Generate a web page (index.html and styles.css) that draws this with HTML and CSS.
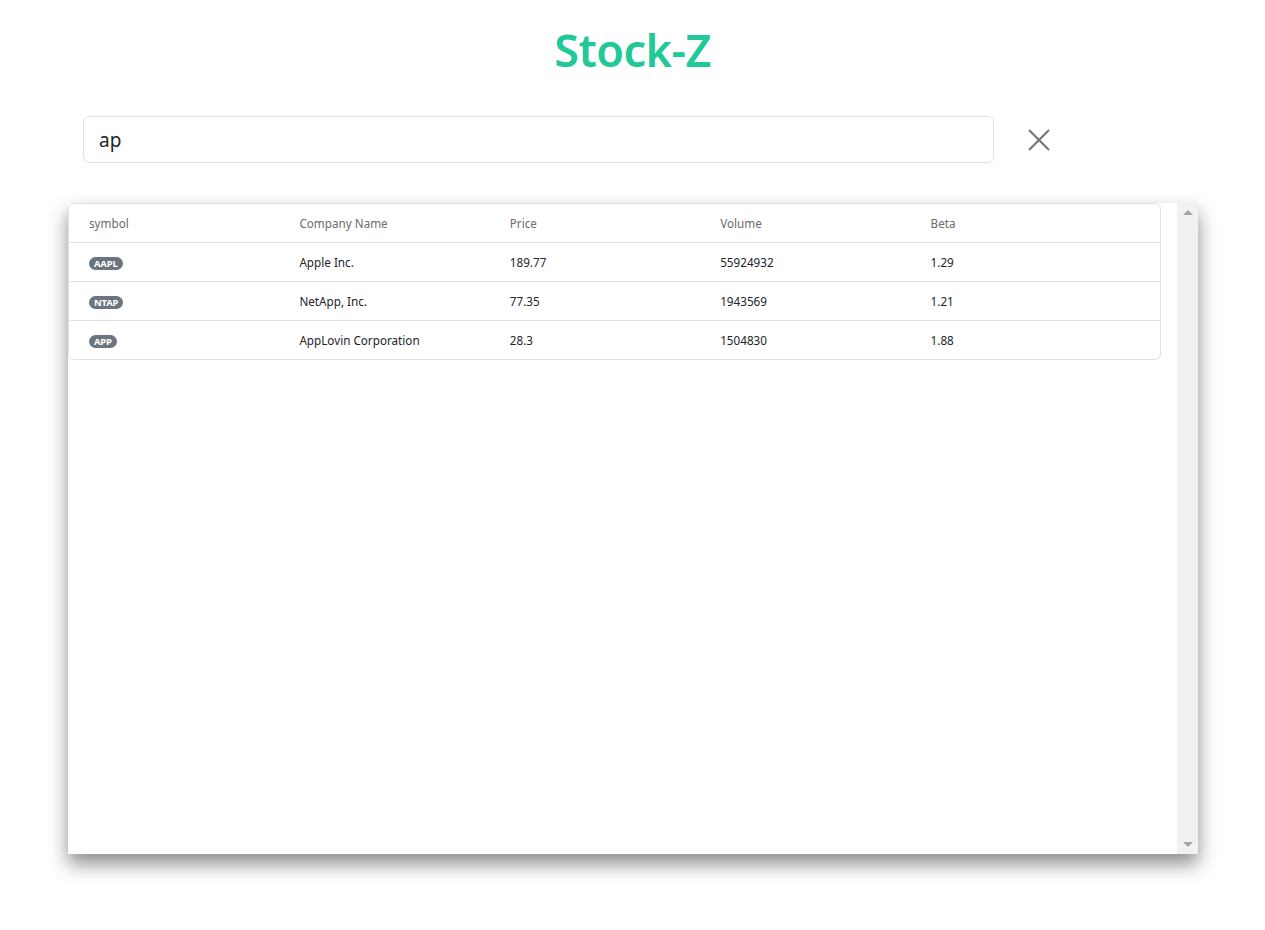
FILE: index.html
```html
<!DOCTYPE html>
<html>
<head>
<meta charset="utf-8">
<link rel="stylesheet" href="styles.css">
</head>
<body>
<div class="app">
  <h1 class="title">Stock-Z</h1>
  <div class="search-row">
    <div class="search-box">ap</div>
    <button class="clear-btn" aria-label="clear">
      <svg width="24" height="24" viewBox="0 0 24 24"><path d="M2 2 L22 22 M22 2 L2 22" stroke="#777" stroke-width="2.2" fill="none"/></svg>
    </button>
  </div>
  <div class="panel">
    <div class="panel-content">
      <div class="table">
        <div class="row head">
          <div>symbol</div><div>Company Name</div><div>Price</div><div>Volume</div><div>Beta</div>
        </div>
        <div class="row">
          <div><span class="badge">AAPL</span></div><div>Apple Inc.</div><div>189.77</div><div>55924932</div><div>1.29</div>
        </div>
        <div class="row">
          <div><span class="badge">NTAP</span></div><div>NetApp, Inc.</div><div>77.35</div><div>1943569</div><div>1.21</div>
        </div>
        <div class="row">
          <div><span class="badge">APP</span></div><div>AppLovin Corporation</div><div>28.3</div><div>1504830</div><div>1.88</div>
        </div>
      </div>
    </div>
    <div class="scrollbar">
      <span class="arrow up"></span>
      <span class="arrow down"></span>
    </div>
  </div>
</div>
</body>
</html>
```
FILE: styles.css
```css
* { box-sizing: border-box; }
html, body { margin: 0; padding: 0; background: #fff; }
body { font-family: "Noto Sans", "Open Sans", "Liberation Sans", sans-serif; color: #212529; }
.app { width: 1265px; height: 930px; padding-top: 20px; }
.title {
  margin: 0;
  text-align: center;
  font-size: 45px;
  font-weight: 600;
  line-height: 60px;
  color: #20c997;
  letter-spacing: -0.5px;
}
.search-row {
  display: flex;
  align-items: center;
  margin: 36px 0 0 83px;
  gap: 33px;
}
.search-box {
  width: 911px;
  height: 47px;
  border: 1px solid #dee2e6;
  border-radius: 6px;
  padding: 0 15px;
  font-size: 19px;
  line-height: 47px;
  color: #212529;
}
.clear-btn {
  border: 0; background: none; padding: 0; width: 24px; height: 24px; display: flex;
}
.panel {
  display: flex;
  margin: 40px 0 0 68px;
  width: 1130px;
  height: 651px;
  background: #fff;
  box-shadow: 0 10px 18px rgba(0,0,0,0.45);
}
.panel-content { flex: 1; padding-right: 16px; }
.table {
  border: 1px solid #dee2e6;
  border-radius: 6px;
  font-size: 11.7px;
}
.row {
  display: grid;
  grid-template-columns: repeat(5, 1fr);
  padding: 0 19px 0 20px;
  height: 39px;
  align-items: center;
  border-top: 1px solid #dee2e6;
  color: #212529;
}
.row:first-child { border-top: 0; height: 38px; }
.row.head { color: #6c6c6c; }
.badge {
  display: inline-block;
  background: #6c757d;
  color: #fff;
  font-size: 9.5px;
  font-weight: 700;
  line-height: 13px;
  padding: 0 5px;
  border-radius: 7px;
  vertical-align: middle;
  letter-spacing: -0.2px;
}
.scrollbar {
  width: 21px;
  background: #f1f1f1;
  display: flex;
  flex-direction: column;
  justify-content: space-between;
  align-items: center;
  padding: 7px 0 7px;
}
.arrow { width: 0; height: 0; border-left: 5px solid transparent; border-right: 5px solid transparent; }
.arrow.up { border-bottom: 5px solid #a3a3a3; }
.arrow.down { border-top: 5px solid #a3a3a3; }
```
